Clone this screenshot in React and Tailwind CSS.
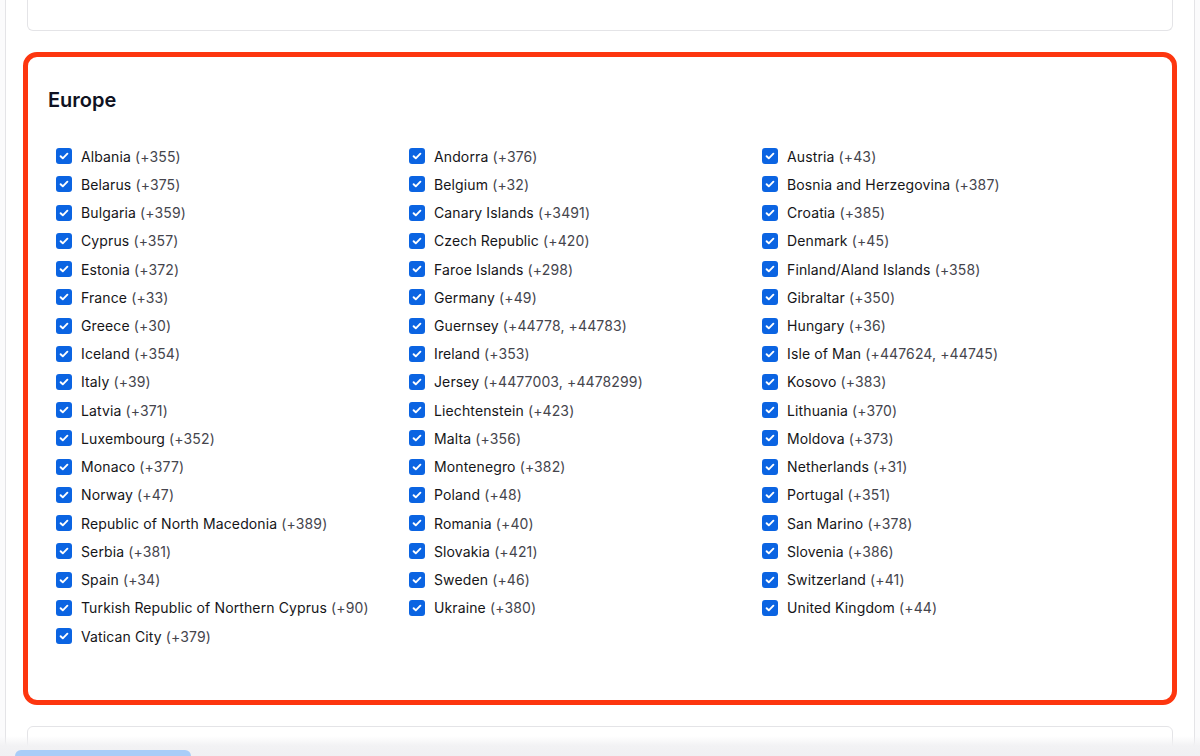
import React from 'react';

const countries = [
  ['Albania', '+355'], ['Andorra', '+376'], ['Austria', '+43'],
  ['Belarus', '+375'], ['Belgium', '+32'], ['Bosnia and Herzegovina', '+387'],
  ['Bulgaria', '+359'], ['Canary Islands', '+3491'], ['Croatia', '+385'],
  ['Cyprus', '+357'], ['Czech Republic', '+420'], ['Denmark', '+45'],
  ['Estonia', '+372'], ['Faroe Islands', '+298'], ['Finland/Aland Islands', '+358'],
  ['France', '+33'], ['Germany', '+49'], ['Gibraltar', '+350'],
  ['Greece', '+30'], ['Guernsey', '+44778, +44783'], ['Hungary', '+36'],
  ['Iceland', '+354'], ['Ireland', '+353'], ['Isle of Man', '+447624, +44745'],
  ['Italy', '+39'], ['Jersey', '+4477003, +4478299'], ['Kosovo', '+383'],
  ['Latvia', '+371'], ['Liechtenstein', '+423'], ['Lithuania', '+370'],
  ['Luxembourg', '+352'], ['Malta', '+356'], ['Moldova', '+373'],
  ['Monaco', '+377'], ['Montenegro', '+382'], ['Netherlands', '+31'],
  ['Norway', '+47'], ['Poland', '+48'], ['Portugal', '+351'],
  ['Republic of North Macedonia', '+389'], ['Romania', '+40'], ['San Marino', '+378'],
  ['Serbia', '+381'], ['Slovakia', '+421'], ['Slovenia', '+386'],
  ['Spain', '+34'], ['Sweden', '+46'], ['Switzerland', '+41'],
  ['Turkish Republic of Northern Cyprus', '+90'], ['Ukraine', '+380'], ['United Kingdom', '+44'],
  ['Vatican City', '+379'],
];

const Checkbox = () => (
  <span className="flex h-4 w-4 shrink-0 items-center justify-center rounded-[3px] bg-[#0b64e2]">
    <svg width="12" height="12" viewBox="0 0 12 12" fill="none">
      <path d="M2.6 6.2l2.2 2.1 4.6-4.6" stroke="white" strokeWidth="1.9" strokeLinecap="round" strokeLinejoin="round" />
    </svg>
  </span>
);

const App = () => {
  return (
    <div className="relative h-[756px] overflow-hidden bg-[#fbfbfc] font-['Inter',sans-serif]">
      <div className="mx-[5px] h-[752px] overflow-hidden rounded-b-[10px] border-x border-b border-[#e4e4e7] bg-white px-[21px]">
        <div className="h-[31px] rounded-b-md border border-t-0 border-[#e4e4e7]" />

        <div className="-mx-[4px] mt-[21px] rounded-[14px] border-[5px] border-[#fd360f] bg-white pb-[50px] pl-[20px] pt-[29px]">
          <h2 className="text-[20px] font-semibold leading-[28px] text-[#0f1222]">Europe</h2>
          <div className="ml-[8px] mt-[28px] grid grid-cols-[353px_353px_353px] auto-rows-[28.24px]">
            {countries.map(([name, code]) => (
              <label key={name} className="flex items-center gap-[9px] text-[14px] tracking-[0.12px] whitespace-nowrap">
                <Checkbox />
                <span className="text-[#151518]">
                  {name} <span className="text-[#45454d]">({code})</span>
                </span>
              </label>
            ))}
          </div>
        </div>

        <div className="mt-[21px] h-[40px] rounded-t-md border border-[#e4e4e7]" />
      </div>

      <div className="absolute inset-x-0 bottom-0 h-[20px] bg-gradient-to-b from-[#f4f4f6]/0 via-[#f2f2f4] to-[#f0f0f3]" />
      <div className="absolute bottom-0 left-[15px] h-[6px] w-[176px] rounded-t-md bg-[#a9cdf8]" />
    </div>
  );
};

export default App;
